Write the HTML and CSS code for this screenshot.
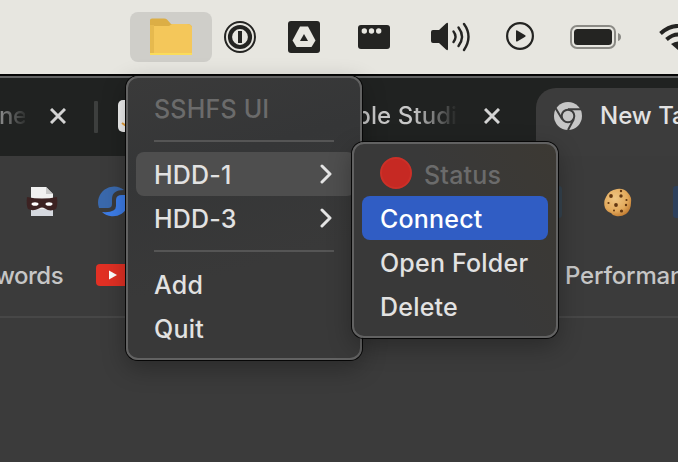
FILE: index.html
```html
<!DOCTYPE html>
<html lang="en">
<head>
<meta charset="utf-8">
<title>SSHFS UI</title>
<link rel="stylesheet" href="styles.css">
</head>
<body>
<header class="menubar">
  <div class="tray-active">
    <svg width="42" height="38" viewBox="0 0 42 38"><path d="M0 2q0-1.500 2-1.500h12q2 0 3 1l4 4.500h16q4 0 5 3v27H0z" fill="#dcae45"/><path d="M4 8h15l3-2h15q4 0 5 3v27H0V8z" fill="#f4c75a"/><path d="M0 7h4v28H0z" fill="#e6b94e"/><path d="M0 35h42v2H0z" fill="#fadc5a"/></svg>
  </div>
  <svg class="i-onepw" width="32" height="32" viewBox="0 0 32 32"><circle cx="16" cy="16" r="15" fill="none" stroke="#242422" stroke-width="2"/><circle cx="16" cy="16" r="10" fill="none" stroke="#242422" stroke-width="4.200"/><path d="M14 10h4v12h-4z" fill="#242422"/></svg>
  <svg class="i-drive" width="32" height="32" viewBox="0 0 32 32"><rect width="32" height="32" rx="3" fill="#242422"/><path d="M12 5.500h8l7.500 14-4 6.500h-15l-4-6.500z" fill="#e7e6e0"/><path d="M16 13l4 7h-8z" fill="#242422"/></svg>
  <svg class="i-dots" width="32" height="24" viewBox="0 0 32 24"><rect width="32" height="24" rx="3" fill="#242422"/><g fill="#e7e6e0"><circle cx="6.300" cy="6" r="2.700"/><circle cx="13.500" cy="6" r="2.700"/><circle cx="20.700" cy="6" r="2.700"/></g></svg>
  <svg class="i-volume" width="40" height="30" viewBox="0 0 40 30"><path d="M2 8h6l7-6.500q2-1.500 2 .5v25q0 2-2 .5L8 21H2q-2 0-2-2v-9q0-2 2-2z" fill="#242422"/><g fill="none" stroke="#242422" stroke-width="2.400" stroke-linecap="round"><path d="M22.500 9.500q4 5 0 10.500"/><path d="M27.500 5.500q7 9 0 18.500"/><path d="M33 2q9 12.500 0 26"/></g></svg>
  <svg class="i-play" width="28" height="28" viewBox="0 0 28 28"><circle cx="14" cy="14" r="12.900" fill="none" stroke="#242422" stroke-width="2.200"/><path d="M10 9.200q0-1.300 1.200-.6l8 4.700q1 .7 0 1.400l-8 4.700q-1.200.6-1.200-.6z" fill="#242422"/></svg>
  <svg class="i-battery" width="52" height="24" viewBox="0 0 52 24"><rect x="1" y="1" width="44" height="22" rx="6" fill="none" stroke="#8b8a85" stroke-width="2"/><rect x="4" y="4" width="38" height="16" rx="3.500" fill="#242422"/><path d="M48 8q3 1 3 4t-3 4z" fill="#8b8a85"/></svg>
  <svg class="i-wifi" width="38" height="26" viewBox="0 0 38 26"><g fill="none" stroke="#242422" stroke-width="4"><path d="M1.500 9.500q17-15 35 0"/><path d="M7.500 15.500q11.500-10 23 0"/></g><path d="M12 20q7-5 14 0l-7 6z" fill="#242422"/></svg>
</header>
<main class="browser">
  <div class="tabs">
    <span class="tab-title t-left">ne</span>
    <svg class="close c1" width="16" height="16" viewBox="0 0 16 16"><path d="M1 1l14 14M15 1L1 15" stroke="#d4d4d4" stroke-width="3"/></svg>
    <i class="divider"></i>
    <svg class="favicon" width="32" height="32" viewBox="0 0 32 32"><rect width="32" height="32" rx="5" fill="#f2f2f2"/><path d="M4 23q5 4 12 5" stroke="#e9a13b" stroke-width="2" fill="none"/></svg>
    <span class="tab-title t-mid">ple Studi</span>
    <svg class="close c2" width="16" height="16" viewBox="0 0 16 16"><path d="M1 1l14 14M15 1L1 15" stroke="#d4d4d4" stroke-width="3"/></svg>
    <div class="tab-active">
      <svg width="28" height="28" viewBox="0 0 28 28"><circle cx="14" cy="14" r="14" fill="#c6c6c6"/><circle cx="14" cy="14" r="6.300" fill="none" stroke="#3c3c3c" stroke-width="2"/><path d="M14 7.300h13M8.200 17.300L1.500 6M19.800 17.300L14 28" stroke="#3c3c3c" stroke-width="2"/></svg>
      <span>New Tab</span>
    </div>
  </div>
  <div class="toolbar">
    <svg class="mask" width="32" height="30" viewBox="0 0 32 30"><path d="M5 0h15l7 7v22H5z" fill="#f1f1f1"/><path d="M20 0v7h7z" fill="#c9c9c9"/><path d="M5 22h22v7H5z" fill="#d6d9df"/><path d="M1 10q15 3 30 0 1 8-1 12-6 3-11-.5-3-2-6 0-6 3-11 .5Q0 18 1 10z" fill="#3c2222"/><ellipse cx="9" cy="17" rx="3.500" ry="1.800" fill="#fff"/><ellipse cx="23" cy="17" rx="3.500" ry="1.800" fill="#fff"/></svg>
    <svg class="swirl" width="32" height="32" viewBox="0 0 32 32"><path d="M1 22A16 16 0 0 1 26 4q-12 0-12 9v5q0 4-4 4z" fill="#3a69ad"/><path d="M4 26q14 1 14-6v-6q0-5 6-5h6A16 16 0 0 1 4 26z" fill="#3d7de8"/></svg>
    <i class="shade"></i>
    <svg class="cookie" width="29" height="29" viewBox="0 0 29 29"><defs><radialGradient id="ck" cx=".4" cy=".35" r=".7"><stop offset="0" stop-color="#efc684"/><stop offset=".65" stop-color="#e3aa5c"/><stop offset="1" stop-color="#c07a30"/></radialGradient></defs><path d="M14 1q7-1 11 4 4 4 3 10 0 7-5 11-5 3-10 2-3 0-5-3-4-1-6-5-2-6 1-11 3-7 11-8z" fill="url(#ck)"/><g fill="#613611"><circle cx="8" cy="8" r="1.900"/><circle cx="18" cy="8" r="1.700"/><circle cx="13" cy="17" r="1.900"/><circle cx="5.500" cy="15" r="1.100"/><circle cx="18.500" cy="23" r="1.600"/><circle cx="23.500" cy="12" r="1.100"/><circle cx="23" cy="17" r="1.200"/><circle cx="11" cy="22.500" r="1"/><circle cx="18" cy="3" r="1.200"/></g></svg>
    <i class="shade s2"></i>
  </div>
  <div class="bookmarks">
    <span class="bm-left">words</span>
    <svg width="32" height="22" viewBox="0 0 32 22"><rect width="40" height="22" rx="4" fill="#e23024"/><path d="M13 6.500l8 4.500-8 4.500z" fill="#fff"/></svg>
    <span class="bm-right">Performance</span>
  </div>
</main>
<nav class="menu main-menu">
  <div class="item disabled w-title">SSHFS UI</div>
  <hr>
  <div class="item hover w-hdd">HDD-1<svg width="12" height="20" viewBox="0 0 12 20"><path d="M2 2l8 8-8 8" fill="none" stroke="#e4e4e4" stroke-width="3" stroke-linecap="round" stroke-linejoin="round"/></svg></div>
  <div class="item w-hdd">HDD-3<svg width="12" height="20" viewBox="0 0 12 20"><path d="M2 2l8 8-8 8" fill="none" stroke="#e4e4e4" stroke-width="3" stroke-linecap="round" stroke-linejoin="round"/></svg></div>
  <hr>
  <div class="item">Add</div>
  <div class="item">Quit</div>
</nav>
<nav class="menu sub-menu">
  <div class="item disabled"><i class="status-dot"></i>Status</div>
  <div class="item selected">Connect</div>
  <div class="item">Open Folder</div>
  <div class="item">Delete</div>
</nav>
</body>
</html>
```

FILE: styles.css
```css
* { box-sizing: border-box; }
body {
  margin: 0;
  width: 678px;
  height: 462px;
  overflow: hidden;
  position: relative;
  background: #3b3b3b;
  font-family: Inter, "Liberation Sans", sans-serif;
  font-size: 25px;
  font-weight: 460;
  color: #e2e2e2;
}
svg { display: block; flex: none; }
i { flex: none; }

.menubar {
  display: flex;
  align-items: center;
  height: 74px;
  padding-left: 130px;
  background: #e7e6e0;
  overflow: hidden;
}
.tray-active {
  flex: none;
  width: 82px;
  height: 50px;
  border-radius: 8px;
  background: #cfcec9;
  padding: 6px 0 0 20px;
}
.i-onepw { margin-left: 12px; }
.i-drive { margin-left: 32px; }
.i-dots { margin-left: 38px; }
.i-volume { margin-left: 41px; }
.i-play { margin-left: 35px; margin-top: -2px; }
.i-battery { margin-left: 36px; }
.i-wifi { margin-left: 37px; margin-top: -1px; }

.browser {
  height: 388px;
  overflow: hidden;
  border-top: 2px solid #050505;
}
.tabs {
  display: flex;
  align-items: center;
  height: 80px;
  border-top: 2px solid #626363;
  background: #202221;
  white-space: nowrap;
}
.tab-title { flex: none; color: #c2c2c2; font-size: 24px; line-height: 30px; margin-top: -2px; }
.t-left {
  width: 26px;
  margin-left: -1px;
  overflow: hidden;
  letter-spacing: -0.5px;
  color: transparent;
  background: linear-gradient(90deg, #8d8e8e, #303231);
  -webkit-background-clip: text;
  background-clip: text;
}
.close { margin-left: 25px; margin-top: -2px; }
.divider { width: 4px; height: 32px; margin-left: 28px; background: #3d3f3e; border-radius: 1px; }
.favicon { margin-left: 20px; margin-top: -2px; }
.t-mid {
  width: 104px;
  margin-left: 206px;
  overflow: hidden;
  letter-spacing: 0.1px;
  color: transparent;
  background: linear-gradient(90deg, #c8c8c8 55%, #202221 98%);
  -webkit-background-clip: text;
  background-clip: text;
}
.c2 { margin-left: 24px; }
.tab-active {
  flex: none;
  align-self: flex-end;
  display: flex;
  align-items: center;
  width: 200px;
  height: 68px;
  padding: 0 0 12px 18px;
  margin-left: 36px;
  border-radius: 20px 0 0 0;
  background: #3c3c3c;
  font-size: 24px;
}
.tab-active span { margin: -1px 0 0 18px; }

.toolbar { display: flex; align-items: center; height: 92px; padding-left: 26px; }
.swirl { margin-left: 40px; }
.shade { width: 16px; height: 32px; margin-left: 416px; background: #35434f; border-radius: 3px; }
.cookie { margin-left: 41px; }
.s2 { margin-left: 41px; background: #2d405c; }

.bookmarks {
  display: flex;
  align-items: center;
  height: 70px;
  padding-bottom: 14px;
  border-bottom: 2px solid #474747;
  font-size: 24px;
  color: #c6c6c6;
  white-space: nowrap;
}
.bookmarks svg { margin-left: 34px; }
.bm-left { width: 67px; margin-left: -5px; letter-spacing: -0.5px; }
.bm-right { margin-left: 437px; letter-spacing: -0.2px; }

.menu {
  position: absolute;
  padding: 8px;
  border: 2px solid #626262;
  border-radius: 12px;
  background: #393939;
  box-shadow: 0 0 0 1px #070707, 0 8px 24px rgba(0, 0, 0, .3);
}
.main-menu {
  left: 126px;
  top: 76px;
  width: 236px;
  height: 284px;
  background: linear-gradient(165deg, #3a3a3a, #353637 30%, #393939 65%);
}
.sub-menu {
  left: 352px;
  top: 142px;
  width: 206px;
  height: 196px;
  background: linear-gradient(60deg, #393939 55%, #3c3933);
}
.item {
  display: flex;
  align-items: center;
  height: 44px;
  padding: 2px 18px 0;
  border-radius: 8px;
  line-height: 30px;
  letter-spacing: 0.2px;
  white-space: nowrap;
}
.item svg { margin: -2px 5px 0 auto; }
.main-menu .item { margin-right: -3px; }
.hover { background: #4e4e4e; }
.disabled { color: #6b6b6b; }
.selected { background: #305dc4; color: #fff; }
hr {
  height: 2px;
  margin: 10px 18px;
  border: 0;
  background: #555;
}
.status-dot {
  width: 32px;
  height: 32px;
  margin: -4px 12px 0 0;
  border-radius: 50%;
  background: #c62923;
  border: 2px solid #cc3028;
}
```
